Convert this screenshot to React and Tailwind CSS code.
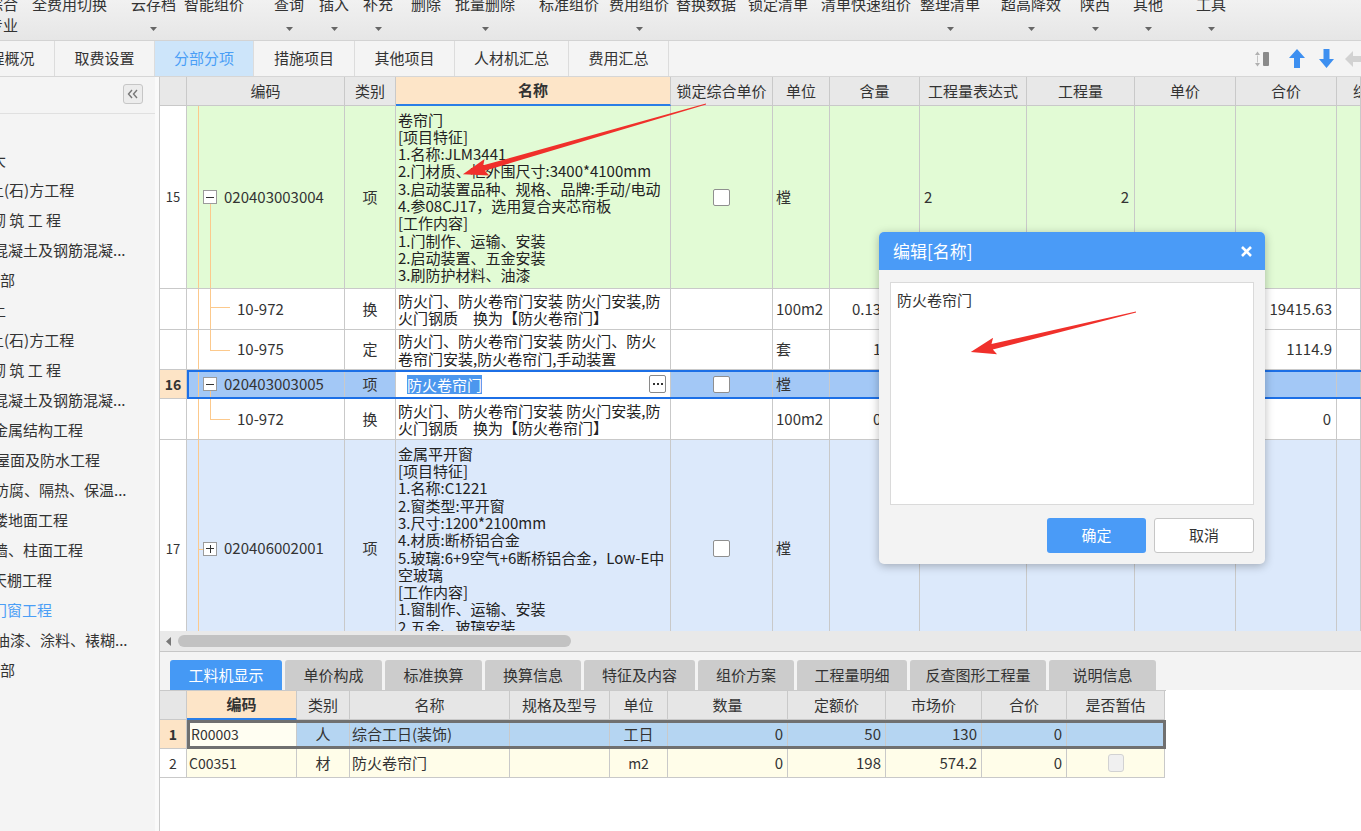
import React from "react";

const MAIN_COLS =
  "grid grid-cols-[27px_158px_51px_275px_102px_57px_90px_107px_108px_101px_101px_24px]";
const SUB_COLS =
  "grid grid-cols-[27px_110px_53px_160px_100px_58px_120px_98px_96px_85px_98px]";

const TL = "absolute bg-[#fcc98c]";

function Cell({ className = "", children }) {
  return (
    <div className={`border-r border-b border-[#c9c9c9] overflow-hidden whitespace-nowrap ${className}`}>
      {children}
    </div>
  );
}

function TreeBox({ plus }) {
  return (
    <span className="relative flex items-center justify-center w-[14px] h-[14px] shrink-0 border border-[#9b9b9b] bg-white">
      <span className="w-[8px] h-px bg-[#333]" />
      {plus && <span className="absolute w-px h-[8px] bg-[#333]" />}
    </span>
  );
}

function Check() {
  return <span className="w-[17px] h-[17px] rounded-[2px] border border-[#8f8f8f] bg-white" />;
}

function Lines({ lines }) {
  return (
    <div className="flex flex-col leading-[17.3px] text-[#222]">
      {lines.map((l, i) => (
        <span key={i} className="h-[17.3px]">
          {l}
        </span>
      ))}
    </div>
  );
}

function Tool({ label, arrow, className = "" }) {
  return (
    <div className={`flex flex-col items-center shrink-0 ${className}`}>
      <span className="h-[18px] leading-[18px] whitespace-nowrap">{label}</span>
      {arrow && (
        <svg className="mt-[14px]" width="7" height="4" viewBox="0 0 7 4">
          <path d="M0 0h7L3.5 4z" fill="#666" />
        </svg>
      )}
    </div>
  );
}

function Toolbar() {
  return (
    <div className="h-[41px] border-b border-[#d3d3d3] bg-linear-to-b from-[#f1f1f1] to-[#e6e6e6] overflow-hidden">
      <div className="flex items-start -mt-[5px]">
        <div className="flex flex-col gap-[3px] -ml-[12px] w-[30px] shrink-0">
          <span className="h-[18px] leading-[18px]">综合</span>
          <span className="h-[18px] leading-[18px]">专业</span>
        </div>
        <Tool label="全费用切换" className="ml-[14px] w-[75px]" />
        <Tool label="云存档" arrow className="ml-[24px] w-[45px]" />
        <Tool label="智能组价" className="ml-[8px] w-[60px]" />
        <Tool label="查询" arrow className="ml-[30px] w-[30px]" />
        <Tool label="插入" arrow className="ml-[15px] w-[30px]" />
        <Tool label="补充" arrow className="ml-[14px] w-[30px]" />
        <Tool label="删除" className="ml-[18px] w-[30px]" />
        <Tool label="批量删除" arrow className="ml-[14px] w-[60px]" />
        <Tool label="标准组价" className="ml-[24px] w-[60px]" />
        <Tool label="费用组价" arrow className="ml-[10px] w-[60px]" />
        <Tool label="替换数据" className="ml-[7px] w-[60px]" />
        <Tool label="锁定清单" className="ml-[12px] w-[60px]" />
        <Tool label="清单快速组价" className="ml-[13px] w-[90px]" />
        <Tool label="整理清单" arrow className="ml-[9px] w-[60px]" />
        <Tool label="超高降效" arrow className="ml-[21px] w-[60px]" />
        <Tool label="陕西" arrow className="ml-[19px] w-[30px]" />
        <Tool label="其他" arrow className="ml-[23px] w-[30px]" />
        <Tool label="工具" arrow className="ml-[33px] w-[30px]" />
      </div>
    </div>
  );
}

function TabRow() {
  const tab = "h-full flex items-center justify-center border-r border-[#dcdcdc] shrink-0";
  return (
    <div className="h-[36px] bg-[#f4f4f4] border-b border-[#d6d6d6] flex">
      <div className={`${tab} -ml-[45px] w-[100px]`}>工程概况</div>
      <div className={`${tab} w-[100px]`}>取费设置</div>
      <div className={`${tab} w-[99px] bg-[#cde5fa] text-[#4a9ef6]`}>分部分项</div>
      <div className={`${tab} w-[101px]`}>措施项目</div>
      <div className={`${tab} w-[100px]`}>其他项目</div>
      <div className={`${tab} w-[114px]`}>人材机汇总</div>
      <div className={`${tab} w-[100px]`}>费用汇总</div>
      <div className="flex-1" />
      <div className="flex items-center shrink-0 w-[107px]">
        <svg width="17" height="18" viewBox="0 0 17 18">
          <path d="M1 5L3.5 1.5L6 5z" fill="#b0b0b0" />
          <rect x="3" y="5.5" width="1" height="7" fill="#c4c4c4" />
          <path d="M1 13L3.5 16.5L6 13z" fill="#b0b0b0" />
          <rect x="9" y="2" width="6" height="14" rx="1" fill="#8a8a8a" />
        </svg>
        <svg className="ml-[18px]" width="16" height="19" viewBox="0 0 16 19">
          <path d="M8 0L16 9H11V19H5V9H0z" fill="#3d8ff0" />
        </svg>
        <svg className="ml-[14px]" width="15" height="19" viewBox="0 0 15 19">
          <path d="M7.5 19L0 10H4.5V0H10.5V10H15z" fill="#3d8ff0" />
        </svg>
        <svg className="ml-[11px] shrink-0" width="16" height="16" viewBox="0 0 16 16">
          <path d="M0 8L8 0V5H16V11H8V16z" fill="#d2d2d2" />
        </svg>
      </div>
    </div>
  );
}

function LeftPanel() {
  const item = "h-[30px] leading-[30px] whitespace-nowrap";
  return (
    <div className="w-[155px] shrink-0 bg-[#f4f4f4] flex flex-col overflow-hidden">
      <div className="h-[37px] shrink-0 flex justify-end pr-[12px] pt-[7px] border-b border-[#e0e0e0]">
        <div className="w-[20px] h-[20px] rounded-[3px] border border-[#c6c6c6] bg-[#ececec] flex items-center justify-center">
          <svg width="12" height="10" viewBox="0 0 12 10">
            <path d="M5 1L1.5 5L5 9M10 1L6.5 5L10 9" stroke="#777" strokeWidth="1.4" fill="none" />
          </svg>
        </div>
      </div>
      <div className="pt-[31px] flex flex-col">
        <span className={`${item} -ml-[9px]`}>大</span>
        <span className={`${item} -ml-[11px]`}>土(石)方工程</span>
        <span className={`${item} -ml-[9px]`}>砌 筑 工 程</span>
        <span className={`${item} -ml-[7px]`}>混凝土及钢筋混凝...</span>
        <span className={item}>部</span>
        <span className={`${item} -ml-[9px]`}>土</span>
        <span className={`${item} -ml-[11px]`}>土(石)方工程</span>
        <span className={`${item} -ml-[9px]`}>砌 筑 工 程</span>
        <span className={`${item} -ml-[7px]`}>混凝土及钢筋混凝...</span>
        <span className={`${item} -ml-[7px]`}>金属结构工程</span>
        <span className={`${item} -ml-[5px]`}>屋面及防水工程</span>
        <span className={`${item} -ml-[6px]`}>防腐、隔热、保温...</span>
        <span className={`${item} -ml-[7px]`}>楼地面工程</span>
        <span className={`${item} -ml-[7px]`}>墙、柱面工程</span>
        <span className={`${item} -ml-[8px]`}>天棚工程</span>
        <span className={`${item} -ml-[8px] text-[#4a9ef6]`}>门窗工程</span>
        <span className={`${item} -ml-[5px]`}>油漆、涂料、裱糊...</span>
        <span className={item}>部</span>
      </div>
    </div>
  );
}

function MainGrid() {
  const GREEN = "bg-[#e2fbd5]";
  const LB = "bg-[#dce9fb]";
  const SEL = "bg-[#a3c8f6]";
  const H = "flex items-center justify-center";
  const num = "flex items-center justify-center text-[13px] bg-white";
  return (
    <div className="h-[554px] overflow-hidden flex flex-col">
      <div className={`${MAIN_COLS} h-[29px] shrink-0 bg-[#e8e8e8]`}>
        <Cell />
        <Cell className={H}>编码</Cell>
        <Cell className={H}>类别</Cell>
        <Cell className={`${H} bg-[#fde5c8] font-bold border-b-2 border-b-[#2a7ee6]`}>名称</Cell>
        <Cell className={H}>锁定综合单价</Cell>
        <Cell className={H}>单位</Cell>
        <Cell className={H}>含量</Cell>
        <Cell className={H}>工程量表达式</Cell>
        <Cell className={H}>工程量</Cell>
        <Cell className={H}>单价</Cell>
        <Cell className={H}>合价</Cell>
        <Cell className="flex items-center pl-[16px]">综合单价</Cell>
      </div>

      {/* row 15 */}
      <div className={`${MAIN_COLS} h-[183px] shrink-0`}>
        <Cell className={num}>15</Cell>
        <Cell className={`${GREEN} relative flex items-center pl-[16px] gap-[7px]`}>
          <span className={`${TL} left-[11px] top-0 bottom-0 w-px`} />
          <span className={`${TL} left-[23px] top-[98px] bottom-0 w-px`} />
          <TreeBox />
          <span>020403003004</span>
        </Cell>
        <Cell className={`${GREEN} ${H}`}>项</Cell>
        <Cell className={`${GREEN} flex items-center pl-[2px]`}>
          <Lines
            lines={[
              "卷帘门",
              "[项目特征]",
              "1.名称:JLM3441",
              "2.门材质、框外围尺寸:3400*4100mm",
              "3.启动装置品种、规格、品牌:手动/电动",
              "4.参08CJ17，选用复合夹芯帘板",
              "[工作内容]",
              "1.门制作、运输、安装",
              "2.启动装置、五金安装",
              "3.刷防护材料、油漆",
            ]}
          />
        </Cell>
        <Cell className={`${GREEN} ${H}`}>
          <Check />
        </Cell>
        <Cell className={`${GREEN} flex items-center pl-[3px]`}>樘</Cell>
        <Cell className={GREEN} />
        <Cell className={`${GREEN} flex items-center pl-[4px]`}>2</Cell>
        <Cell className={`${GREEN} flex items-center justify-end pr-[5px]`}>2</Cell>
        <Cell className={GREEN} />
        <Cell className={GREEN} />
        <Cell className={GREEN} />
      </div>

      {/* 10-972 */}
      <div className={`${MAIN_COLS} h-[41px] shrink-0 bg-white`}>
        <Cell />
        <Cell className="relative flex items-center pl-[50px]">
          <span className={`${TL} left-[11px] top-0 bottom-0 w-px`} />
          <span className={`${TL} left-[23px] top-0 bottom-0 w-px`} />
          <span className={`${TL} left-[23px] top-[18px] w-[20px] h-px`} />
          <span>10-972</span>
        </Cell>
        <Cell className={H}>换</Cell>
        <Cell className="flex items-center pl-[2px]">
          <Lines lines={["防火门、防火卷帘门安装 防火门安装,防", "火门钢质　换为【防火卷帘门】"]} />
        </Cell>
        <Cell />
        <Cell className="flex items-center pl-[3px]">100m2</Cell>
        <Cell className="flex items-center pl-[22px]">0.13</Cell>
        <Cell />
        <Cell />
        <Cell />
        <Cell className="flex items-center justify-end pr-[4px]">19415.63</Cell>
        <Cell />
      </div>

      {/* 10-975 */}
      <div className={`${MAIN_COLS} h-[40px] shrink-0 bg-white`}>
        <Cell />
        <Cell className="relative flex items-center pl-[50px]">
          <span className={`${TL} left-[11px] top-0 bottom-0 w-px`} />
          <span className={`${TL} left-[23px] top-0 h-[20px] w-px`} />
          <span className={`${TL} left-[23px] top-[20px] w-[20px] h-px`} />
          <span>10-975</span>
        </Cell>
        <Cell className={H}>定</Cell>
        <Cell className="flex items-center pl-[2px]">
          <Lines lines={["防火门、防火卷帘门安装 防火门、防火", "卷帘门安装,防火卷帘门,手动装置"]} />
        </Cell>
        <Cell />
        <Cell className="flex items-center pl-[3px]">套</Cell>
        <Cell className="flex items-center pl-[43px]">1</Cell>
        <Cell />
        <Cell />
        <Cell />
        <Cell className="flex items-center justify-end pr-[4px]">1114.9</Cell>
        <Cell />
      </div>

      {/* row 16 selected */}
      <div className={`${MAIN_COLS} h-[29px] shrink-0 relative`}>
        <Cell className="flex items-center justify-center text-[14px] font-bold bg-[#fde4c6]">16</Cell>
        <Cell className={`${SEL} relative flex items-center pl-[16px] gap-[7px]`}>
          <span className={`${TL} left-[11px] top-0 bottom-0 w-px`} />
          <span className={`${TL} left-[23px] top-[21px] bottom-0 w-px`} />
          <TreeBox />
          <span>020403003005</span>
        </Cell>
        <Cell className={`${SEL} ${H}`}>项</Cell>
        <Cell className="bg-white flex items-center pl-[11px] pr-[4px]">
          <span className="bg-[#4c97ee] text-white leading-[19px]">防火卷帘门</span>
          <span className="ml-auto w-[17px] h-[18px] rounded-[2px] border border-[#8a8a8a] bg-white flex items-center justify-center gap-[2px]">
            <span className="w-[2px] h-[2px] bg-[#333]" />
            <span className="w-[2px] h-[2px] bg-[#333]" />
            <span className="w-[2px] h-[2px] bg-[#333]" />
          </span>
        </Cell>
        <Cell className={`${SEL} ${H}`}>
          <Check />
        </Cell>
        <Cell className={`${SEL} flex items-center pl-[3px]`}>樘</Cell>
        <Cell className={SEL} />
        <Cell className={SEL} />
        <Cell className={SEL} />
        <Cell className={SEL} />
        <Cell className={SEL} />
        <Cell className={SEL} />
        <span className="absolute left-[27px] top-0 bottom-0 -right-[4px] border-2 border-[#1c6fe6] pointer-events-none" />
      </div>

      {/* 10-972 (2) */}
      <div className={`${MAIN_COLS} h-[41px] shrink-0 bg-white`}>
        <Cell />
        <Cell className="relative flex items-center pl-[50px]">
          <span className={`${TL} left-[11px] top-0 bottom-0 w-px`} />
          <span className={`${TL} left-[23px] top-0 h-[20px] w-px`} />
          <span className={`${TL} left-[23px] top-[20px] w-[20px] h-px`} />
          <span>10-972</span>
        </Cell>
        <Cell className={H}>换</Cell>
        <Cell className="flex items-center pl-[2px]">
          <Lines lines={["防火门、防火卷帘门安装 防火门安装,防", "火门钢质　换为【防火卷帘门】"]} />
        </Cell>
        <Cell />
        <Cell className="flex items-center pl-[3px]">100m2</Cell>
        <Cell className="flex items-center pl-[43px]">0</Cell>
        <Cell />
        <Cell />
        <Cell />
        <Cell className="flex items-center justify-end pr-[5px]">0</Cell>
        <Cell />
      </div>

      {/* row 17 */}
      <div className={`${MAIN_COLS} h-[218px] shrink-0`}>
        <Cell className={num}>17</Cell>
        <Cell className={`${LB} relative flex items-center pl-[16px] gap-[7px]`}>
          <span className={`${TL} left-[11px] top-0 bottom-0 w-px`} />
          <span className={`${TL} left-[11px] top-1/2 w-[5px] h-px`} />
          <TreeBox plus />
          <span>020406002001</span>
        </Cell>
        <Cell className={`${LB} ${H}`}>项</Cell>
        <Cell className={`${LB} flex items-center pl-[2px]`}>
          <Lines
            lines={[
              "金属平开窗",
              "[项目特征]",
              "1.名称:C1221",
              "2.窗类型:平开窗",
              "3.尺寸:1200*2100mm",
              "4.材质:断桥铝合金",
              "5.玻璃:6+9空气+6断桥铝合金，Low-E中",
              "空玻璃",
              "[工作内容]",
              "1.窗制作、运输、安装",
              "2.五金、玻璃安装",
              "3.刷防护材料、油漆",
            ]}
          />
        </Cell>
        <Cell className={`${LB} ${H}`}>
          <Check />
        </Cell>
        <Cell className={`${LB} flex items-center pl-[3px]`}>樘</Cell>
        <Cell className={LB} />
        <Cell className={LB} />
        <Cell className={LB} />
        <Cell className={LB} />
        <Cell className={LB} />
        <Cell className={LB} />
      </div>
    </div>
  );
}

function BottomPanel() {
  const tab = "h-[30px] rounded-t-[3px] flex items-center justify-center shrink-0";
  const off = `${tab} bg-[#cccccc] text-[#333]`;
  const H = "flex items-center justify-center bg-[#e6e6e6]";
  const R = "flex items-center justify-end pr-[4px]";
  const C = "flex items-center justify-center";
  const L = "flex items-center pl-[2px]";
  const BLUE = "bg-[#b5d5f2]";
  const CREAM = "bg-[#fffde9]";
  return (
    <div className="flex flex-col flex-1">
      <div className="h-[21px] shrink-0 bg-[#e9e9e9] border-b border-[#c6c6c6] flex items-center">
        <svg className="ml-[6px]" width="5" height="9" viewBox="0 0 5 9">
          <path d="M5 0V9L0 4.5z" fill="#777" />
        </svg>
        <div className="ml-[7px] w-[393px] h-[12px] rounded-full bg-[#c2c2c2]" />
      </div>
      <div className="h-[38px] shrink-0 bg-[#f3f3f3] flex items-end gap-[3px] pl-[10px]">
        <div className={`${tab} w-[112px] bg-[#4599f5] text-white`}>工料机显示</div>
        <div className={`${off} w-[97px]`}>单价构成</div>
        <div className={`${off} w-[97px]`}>标准换算</div>
        <div className={`${off} w-[96px]`}>换算信息</div>
        <div className={`${off} w-[111px]`}>特征及内容</div>
        <div className={`${off} w-[96px]`}>组价方案</div>
        <div className={`${off} w-[110px]`}>工程量明细</div>
        <div className={`${off} w-[136px]`}>反查图形工程量</div>
        <div className={`${off} w-[107px]`}>说明信息</div>
      </div>
      <div className="w-[1006px] border-t border-[#c9c9c9]">
        <div className={`${SUB_COLS} h-[29px]`}>
          <Cell className={H} />
          <Cell className="flex items-center justify-center bg-[#fde5c8] font-bold border-b-2 border-b-[#2a7ee6]">编码</Cell>
          <Cell className={H}>类别</Cell>
          <Cell className={H}>名称</Cell>
          <Cell className={H}>规格及型号</Cell>
          <Cell className={H}>单位</Cell>
          <Cell className={H}>数量</Cell>
          <Cell className={H}>定额价</Cell>
          <Cell className={H}>市场价</Cell>
          <Cell className={H}>合价</Cell>
          <Cell className={H}>是否暂估</Cell>
        </div>
        <div className={`${SUB_COLS} h-[29px] relative`}>
          <Cell className="flex items-center justify-center bg-[#fde4c6] font-bold text-[14px]">1</Cell>
          <Cell className={`${L} bg-[#fffef2] text-[14px] pl-[4px]`}>R00003</Cell>
          <Cell className={`${C} ${BLUE}`}>人</Cell>
          <Cell className={`${L} ${BLUE}`}>综合工日(装饰)</Cell>
          <Cell className={BLUE} />
          <Cell className={`${C} ${BLUE}`}>工日</Cell>
          <Cell className={`${R} ${BLUE}`}>0</Cell>
          <Cell className={`${R} ${BLUE}`}>50</Cell>
          <Cell className={`${R} ${BLUE}`}>130</Cell>
          <Cell className={`${R} ${BLUE}`}>0</Cell>
          <Cell className={BLUE} />
          <span className="absolute left-[27px] top-0 bottom-0 w-[979px] border-[3px] border-[#707070] pointer-events-none" />
        </div>
        <div className={`${SUB_COLS} h-[29px]`}>
          <Cell className="flex items-center justify-center bg-white text-[14px]">2</Cell>
          <Cell className={`${L} ${CREAM} text-[14px]`}>C00351</Cell>
          <Cell className={`${C} ${CREAM}`}>材</Cell>
          <Cell className={`${L} ${CREAM}`}>防火卷帘门</Cell>
          <Cell className={CREAM} />
          <Cell className={`${C} ${CREAM} text-[14px]`}>m2</Cell>
          <Cell className={`${R} ${CREAM}`}>0</Cell>
          <Cell className={`${R} ${CREAM}`}>198</Cell>
          <Cell className={`${R} ${CREAM}`}>574.2</Cell>
          <Cell className={`${R} ${CREAM}`}>0</Cell>
          <Cell className={`${C} ${CREAM}`}>
            <span className="w-[16px] h-[18px] rounded-[3px] border border-[#d2d2d2] bg-[#f0f0f0]" />
          </Cell>
        </div>
      </div>
    </div>
  );
}

function EditDialog() {
  return (
    <div className="absolute left-[879px] top-[232px] w-[386px] h-[332px] rounded-[5px] bg-[#f3f3f3] shadow-[0_2px_10px_rgba(0,0,0,0.28)] overflow-hidden flex flex-col">
      <div className="h-[38px] shrink-0 bg-[#4a9bf7] flex items-center justify-between pl-[14px] pr-[13px] text-white text-[17px]">
        <span>编辑[名称]</span>
        <svg width="11" height="11" viewBox="0 0 11 11">
          <path d="M1 1L10 10M10 1L1 10" stroke="#fff" strokeWidth="2.6" />
        </svg>
      </div>
      <div className="mx-[11px] mt-[12px] h-[223px] shrink-0 bg-white border border-[#dadada] px-[6px] py-[6px] leading-[22px]">
        防火卷帘门
      </div>
      <div className="flex justify-end gap-[8px] mt-[13px] mr-[11px]">
        <div className="w-[99px] h-[35px] rounded-[3px] bg-[#4a9bf7] text-white flex items-center justify-center">确定</div>
        <div className="w-[100px] h-[35px] rounded-[3px] bg-white border border-[#c6c6c6] flex items-center justify-center">取消</div>
      </div>
    </div>
  );
}

function Arrows() {
  const arrow = (L) =>
    `0,-0.4 ${L - 22},-2.8 ${L - 25},-8.5 ${L},0 ${L - 25},8.5 ${L - 22},2.8 0,0.4`;
  return (
    <svg className="absolute left-0 top-0 pointer-events-none" width="1361" height="831">
      <polygon points={arrow(253)} fill="#f0302b" transform="translate(706 104) rotate(163.9)" />
      <polygon points={arrow(170)} fill="#f0302b" transform="translate(1136 312) rotate(166.4)" />
    </svg>
  );
}

export default function App() {
  return (
    <div className="relative w-[1361px] h-[831px] overflow-hidden bg-white text-[15px] text-[#333] font-['Noto_Sans_CJK_SC',sans-serif]">
      <Toolbar />
      <TabRow />
      <div className="flex h-[754px]">
        <LeftPanel />
        <div className="w-[4px] shrink-0 bg-[#fafafa]" />
        <div className="flex-1 flex flex-col border-l border-[#c9c9c9] overflow-hidden">
          <MainGrid />
          <BottomPanel />
        </div>
      </div>
      <EditDialog />
      <Arrows />
    </div>
  );
}
